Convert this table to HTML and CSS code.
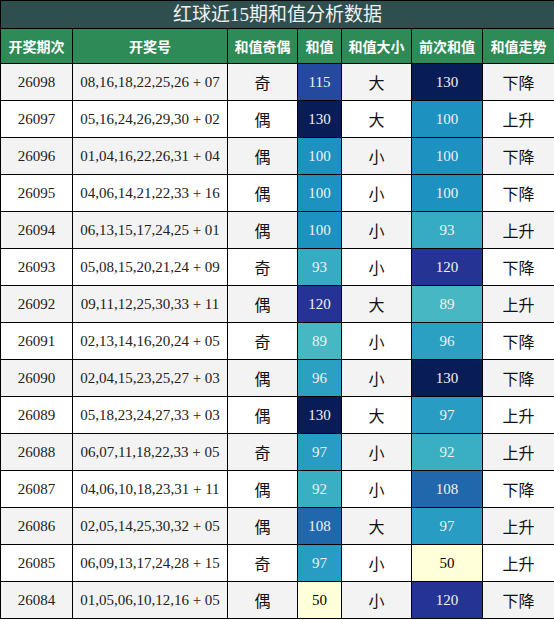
FILE: index.html
```html
<!DOCTYPE html>
<html lang="zh">
<head>
  <meta charset="UTF-8" />
  <title>红球近15期和值分析数据</title>
  <link rel="stylesheet" href="styles.css">
</head>
<body>

  <table class="stats">
    <colgroup>
      <col class="c-issue">
      <col class="c-nums">
      <col class="c-parity">
      <col class="c-sum">
      <col class="c-size">
      <col class="c-prev">
      <col class="c-trend">
    </colgroup>
    <thead>
      <tr class="title-row"><th colspan="7">红球近15期和值分析数据</th></tr>
      <tr class="head-row">
        <th>开奖期次</th>
        <th>开奖号</th>
        <th>和值奇偶</th>
        <th>和值</th>
        <th>和值大小</th>
        <th>前次和值</th>
        <th>和值走势</th>
      </tr>
    </thead>
    <tbody>
      <tr><td>26098</td><td>08,16,18,22,25,26 + 07</td><td class="zh">奇</td><td class="v115">115</td><td class="zh">大</td><td class="v130">130</td><td class="zh">下降</td></tr>
      <tr><td>26097</td><td>05,16,24,26,29,30 + 02</td><td class="zh">偶</td><td class="v130">130</td><td class="zh">大</td><td class="v100">100</td><td class="zh">上升</td></tr>
      <tr><td>26096</td><td>01,04,16,22,26,31 + 04</td><td class="zh">偶</td><td class="v100">100</td><td class="zh">小</td><td class="v100">100</td><td class="zh">下降</td></tr>
      <tr><td>26095</td><td>04,06,14,21,22,33 + 16</td><td class="zh">偶</td><td class="v100">100</td><td class="zh">小</td><td class="v100">100</td><td class="zh">下降</td></tr>
      <tr><td>26094</td><td>06,13,15,17,24,25 + 01</td><td class="zh">偶</td><td class="v100">100</td><td class="zh">小</td><td class="v93">93</td><td class="zh">上升</td></tr>
      <tr><td>26093</td><td>05,08,15,20,21,24 + 09</td><td class="zh">奇</td><td class="v93">93</td><td class="zh">小</td><td class="v120">120</td><td class="zh">下降</td></tr>
      <tr><td>26092</td><td>09,11,12,25,30,33 + 11</td><td class="zh">偶</td><td class="v120">120</td><td class="zh">大</td><td class="v89">89</td><td class="zh">上升</td></tr>
      <tr><td>26091</td><td>02,13,14,16,20,24 + 05</td><td class="zh">奇</td><td class="v89">89</td><td class="zh">小</td><td class="v96">96</td><td class="zh">下降</td></tr>
      <tr><td>26090</td><td>02,04,15,23,25,27 + 03</td><td class="zh">偶</td><td class="v96">96</td><td class="zh">小</td><td class="v130">130</td><td class="zh">下降</td></tr>
      <tr><td>26089</td><td>05,18,23,24,27,33 + 03</td><td class="zh">偶</td><td class="v130">130</td><td class="zh">大</td><td class="v97">97</td><td class="zh">上升</td></tr>
      <tr><td>26088</td><td>06,07,11,18,22,33 + 05</td><td class="zh">奇</td><td class="v97">97</td><td class="zh">小</td><td class="v92">92</td><td class="zh">上升</td></tr>
      <tr><td>26087</td><td>04,06,10,18,23,31 + 11</td><td class="zh">偶</td><td class="v92">92</td><td class="zh">小</td><td class="v108">108</td><td class="zh">下降</td></tr>
      <tr><td>26086</td><td>02,05,14,25,30,32 + 05</td><td class="zh">偶</td><td class="v108">108</td><td class="zh">大</td><td class="v97">97</td><td class="zh">上升</td></tr>
      <tr><td>26085</td><td>06,09,13,17,24,28 + 15</td><td class="zh">奇</td><td class="v97">97</td><td class="zh">小</td><td class="v50">50</td><td class="zh">上升</td></tr>
      <tr><td>26084</td><td>01,05,06,10,12,16 + 05</td><td class="zh">偶</td><td class="v50">50</td><td class="zh">小</td><td class="v120">120</td><td class="zh">下降</td></tr>
    </tbody>
  </table>

</body>
</html>
```

FILE: styles.css
```css
body {
  margin: 0;
  padding: 0;
  background: white;
  font-family: 'Liberation Serif', 'Noto Sans CJK SC', serif;
  color: #222;
}

.stats {
  width: 554px;
  border-collapse: collapse;
  table-layout: fixed;
}

.c-issue { width: 72px }
.c-nums { width: 155px }
.c-parity { width: 70px }
.c-sum { width: 44px }
.c-size { width: 70px }
.c-prev { width: 71px }
.c-trend { width: 72px }

.stats th,
.stats td {
  border: 1px solid #000;
  text-align: center;
  padding: 0;
}

.title-row th {
  height: 27px;
  background: #2f4f4f;
  color: #f0f0f0;
  font-size: 19px;
  font-weight: normal;
  line-height: 27px;
}

.head-row th {
  height: 34px;
  background: #2e8b57;
  color: white;
  font-family: 'Noto Sans CJK SC', sans-serif;
  font-size: 14px;
  font-weight: bold;
}

.stats td {
  height: 36px;
  font-size: 15px;
}

.stats tbody tr:nth-child(odd) { background: #f3f3f3 }
.stats tbody tr:nth-child(even) { background: white }

.stats td.zh {
  font-family: 'Noto Sans CJK SC', sans-serif;
  font-size: 16px;
  color: #111;
}

/* heat colours for the sums (YlGnBu, 50..130) */
.v130 { background: #081d58; color: #f1f1f1 }
.v120 { background: #253494; color: #f1f1f1 }
.v115 { background: #24499e; color: #f1f1f1 }
.v108 { background: #2167ab; color: #f1f1f1 }
.v100 { background: #1d91c0; color: #f1f1f1 }
.v97 { background: #289cc2; color: #f1f1f1 }
.v96 { background: #2ba0c2; color: #f1f1f1 }
.v93 { background: #36abc3; color: #f1f1f1 }
.v92 { background: #3aafc3; color: #f1f1f1 }
.v89 { background: #47b8c3; color: #f1f1f1 }
.v50 { background: #ffffd9; color: #000 }
```
